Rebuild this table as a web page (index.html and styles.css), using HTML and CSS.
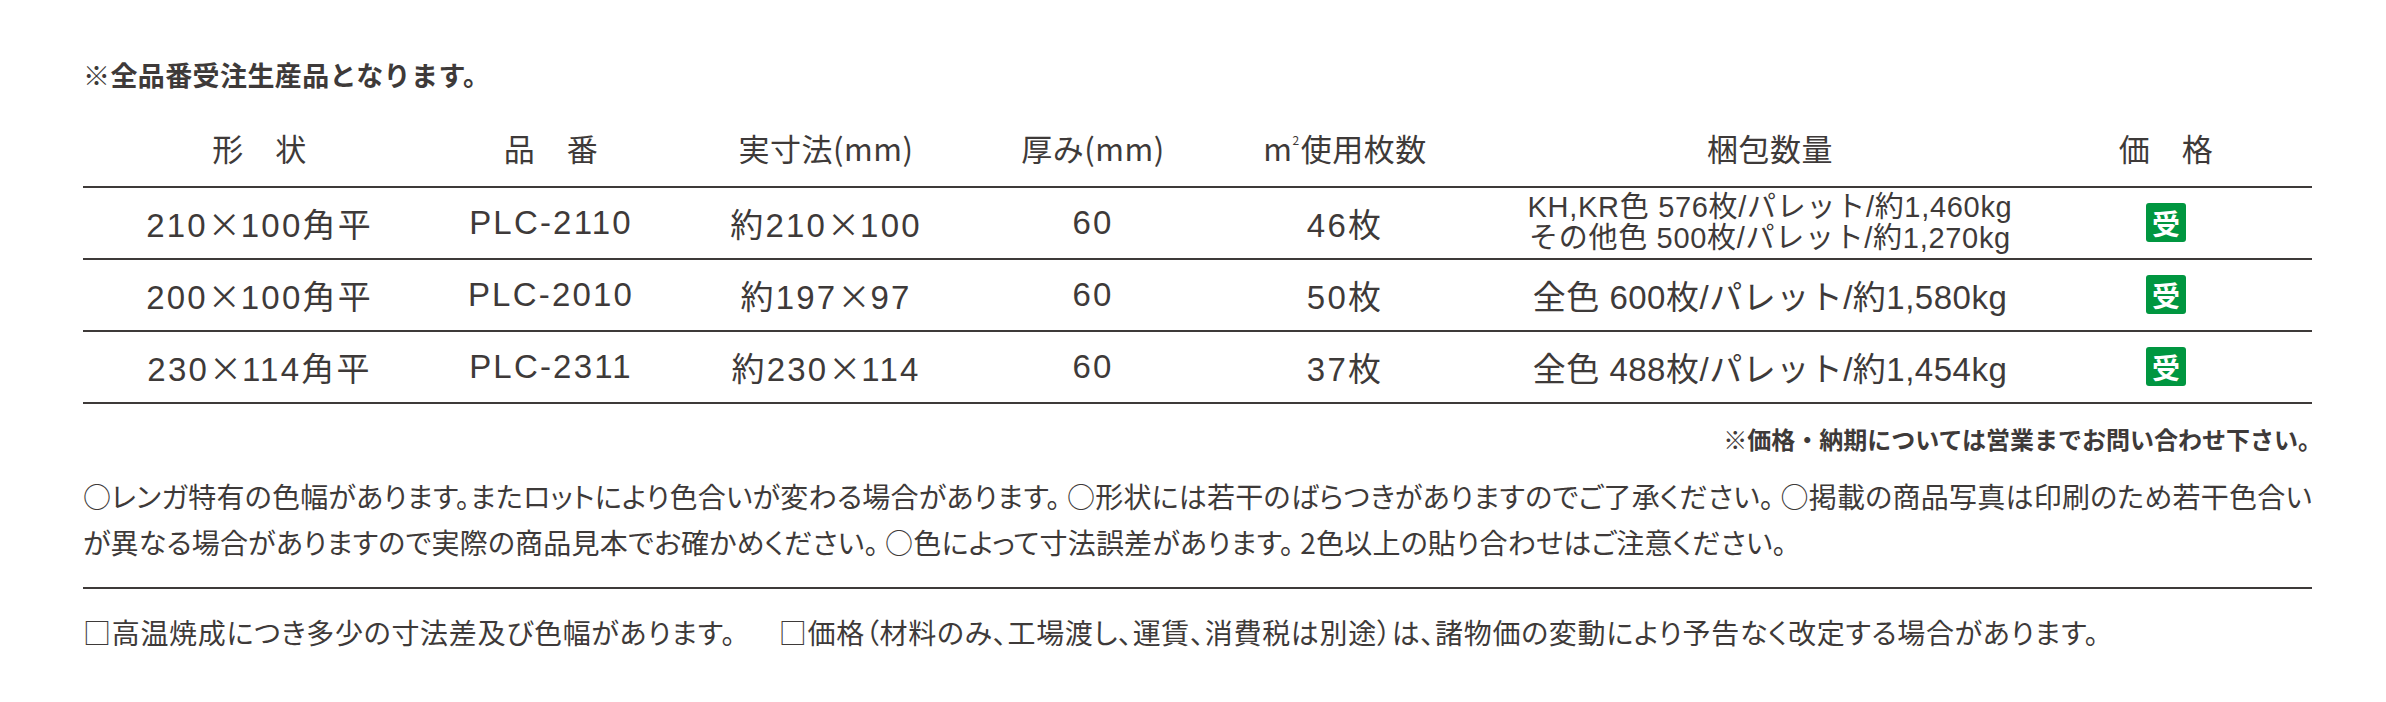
FILE: index.html
```html
<!DOCTYPE html>
<html lang="ja">
<head>
<meta charset="utf-8">
<title>製品仕様</title>
<link rel="stylesheet" href="styles.css">
</head>
<body>
<div class="page">
  <p class="lead">※全品番受注生産品となります。</p>

  <div class="spec">
    <div class="row head">
      <div>形　状</div>
      <div>品　番</div>
      <div>実寸法(mm)</div>
      <div>厚み(mm)</div>
      <div>m<span class="sq">2</span>使用枚数</div>
      <div>梱包数量</div>
      <div>価　格</div>
    </div>
    <div class="row">
      <div class="t">210<span class="x">×</span>100角平</div>
      <div class="t">PLC-2110</div>
      <div class="t">約210<span class="x">×</span>100</div>
      <div class="t">60</div>
      <div class="t">46枚</div>
      <div class="multi">KH,KR色 576枚/パレット/約1,460kg<br>その他色 500枚/パレット/約1,270kg</div>
      <div><span class="badge">受</span></div>
    </div>
    <div class="row">
      <div class="t">200<span class="x">×</span>100角平</div>
      <div class="t">PLC-2010</div>
      <div class="t">約197<span class="x">×</span>97</div>
      <div class="t">60</div>
      <div class="t">50枚</div>
      <div>全色 600枚/パレット/約1,580kg</div>
      <div><span class="badge">受</span></div>
    </div>
    <div class="row">
      <div class="t">230<span class="x">×</span>114角平</div>
      <div class="t">PLC-2311</div>
      <div class="t">約230<span class="x">×</span>114</div>
      <div class="t">60</div>
      <div class="t">37枚</div>
      <div>全色 488枚/パレット/約1,454kg</div>
      <div><span class="badge">受</span></div>
    </div>
  </div>

  <p class="inquiry">※価格・納期については営業までお問い合わせ下さい。</p>

  <div class="notes">
    <p class="line justify">○レンガ特有の色幅があります。またロットにより色合いが変わる場合があります。 ○形状には若干のばらつきがありますのでご了承ください。 ○掲載の商品写真は印刷のため若干色合い</p>
    <p class="line">が異なる場合がありますので実際の商品見本でお確かめください。 ○色によって寸法誤差があります。 2色以上の貼り合わせはご注意ください。</p>
  </div>

  <p class="bottom"><span>□高温焼成につき多少の寸法差及び色幅があります。</span><span class="second">□価格（材料のみ、工場渡し、運賃、消費税は別途）は、諸物価の変動により予告なく改定する場合があります。</span></p>
</div>
</body>
</html>
```

FILE: styles.css
```css
html, body {
  margin: 0;
  padding: 0;
  background: #ffffff;
}

body {
  font-family: "Liberation Sans", "Noto Sans CJK JP", sans-serif;
  color: #3e3a39;
}

.page {
  margin-left: 83px;
  width: 2229px;
}

p {
  margin: 0;
}

.lead {
  margin-top: 57px;
  font-family: "Noto Sans CJK JP", sans-serif;
  font-weight: 700;
  font-size: 27px;
  letter-spacing: 0.4px;
  line-height: 36px;
}

.spec {
  width: 2229px;
}

.row {
  display: grid;
  grid-template-columns: 353px 230px 320px 214px 290px 560px 232px 30px;
  height: 72px;
  box-sizing: border-box;
  border-bottom: 2px solid #3e3a39;
  align-items: center;
  justify-items: center;
  font-size: 33px;
  letter-spacing: 0.5px;
  white-space: nowrap;
}

.row .t {
  letter-spacing: 2.2px;
}

.row .x {
  font-family: "Noto Sans CJK JP", sans-serif;
  letter-spacing: 0;
}

.row.head {
  height: 95px;
  align-items: end;
  padding-bottom: 18px;
  font-family: "Noto Sans CJK JP", sans-serif;
  font-size: 31px;
  line-height: 40px;
  letter-spacing: 0.5px;
}

.sq {
  font-size: 12px;
  vertical-align: 16px;
  line-height: 0;
  margin-right: 1px;
}

.multi {
  font-size: 29px;
  line-height: 31px;
  text-align: center;
  letter-spacing: 0.7px;
}

.badge {
  display: inline-flex;
  align-items: center;
  justify-content: center;
  width: 40px;
  height: 39px;
  border-radius: 3px;
  background: #009640;
  color: #ffffff;
  font-family: "Noto Sans CJK JP", sans-serif;
  font-weight: 700;
  font-size: 28px;
  line-height: 1;
  letter-spacing: 0;
}

.inquiry {
  margin-top: 18px;
  margin-right: -10px;
  text-align: right;
  font-family: "Noto Sans CJK JP", sans-serif;
  font-weight: 700;
  font-size: 24px;
  line-height: 34px;
}

.notes {
  margin-top: 17px;
  font-family: "Noto Sans CJK JP", sans-serif;
  font-size: 28px;
  font-feature-settings: "palt" 1;
  letter-spacing: 0.2px;
  line-height: 46px;
  padding-bottom: 22px;
  border-bottom: 2px solid #3e3a39;
}

.line {
  white-space: nowrap;
}

.line.justify {
  text-align: justify;
  text-align-last: justify;
}

.bottom {
  margin-top: 20px;
  font-family: "Noto Sans CJK JP", sans-serif;
  font-size: 28px;
  font-feature-settings: "palt" 1;
  letter-spacing: 0.7px;
  line-height: 46px;
  white-space: nowrap;
}

.bottom .second {
  margin-left: 43px;
}
```
